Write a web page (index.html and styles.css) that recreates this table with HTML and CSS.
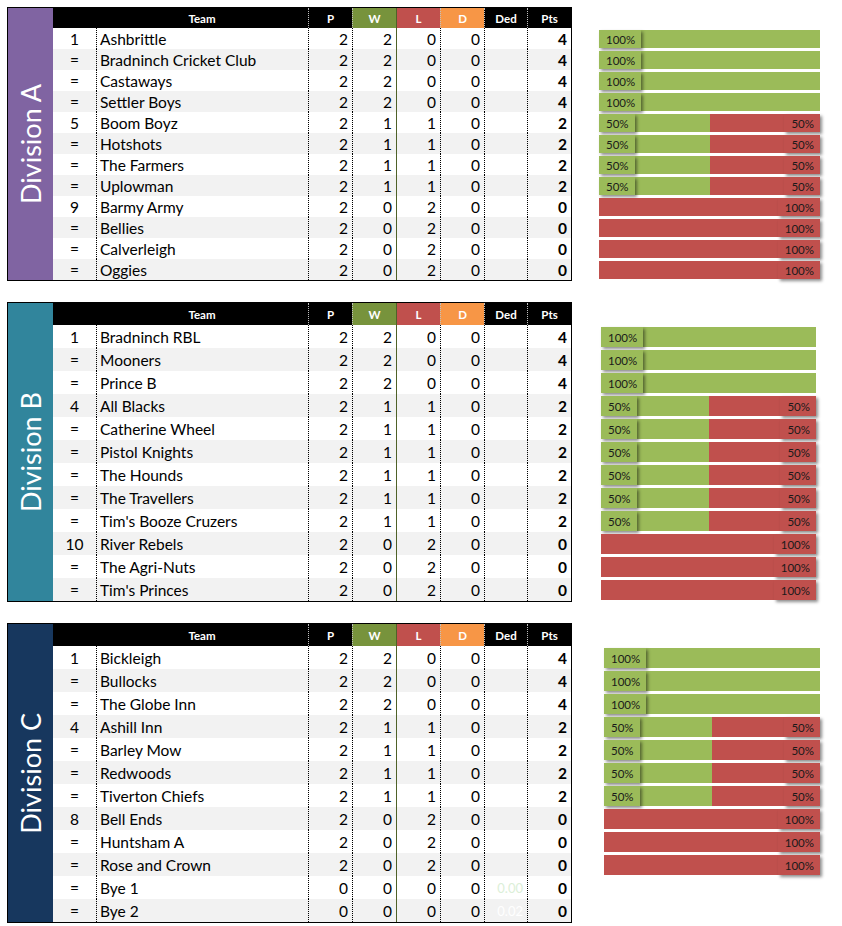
FILE: index.html
```html
<!DOCTYPE html>
<html lang="en">
<head>
<meta charset="utf-8">
<title>League Tables</title>
<link rel="stylesheet" href="styles.css">
</head>
<body>
<div class="page">

<section class="division div-a">
  <div class="board">
    <div class="label"><span>Division A</span></div>
    <div class="grid">
      <div class="row head"><div class="c rank"></div><div class="c team">Team</div><div class="c p">P</div><div class="c w">W</div><div class="c l">L</div><div class="c d">D</div><div class="c ded">Ded</div><div class="c pts">Pts</div></div>
      <div class="row"><div class="c rank">1</div><div class="c team">Ashbrittle</div><div class="c p">2</div><div class="c w">2</div><div class="c l">0</div><div class="c d">0</div><div class="c ded"></div><div class="c pts">4</div></div>
      <div class="row"><div class="c rank">=</div><div class="c team">Bradninch Cricket Club</div><div class="c p">2</div><div class="c w">2</div><div class="c l">0</div><div class="c d">0</div><div class="c ded"></div><div class="c pts">4</div></div>
      <div class="row"><div class="c rank">=</div><div class="c team">Castaways</div><div class="c p">2</div><div class="c w">2</div><div class="c l">0</div><div class="c d">0</div><div class="c ded"></div><div class="c pts">4</div></div>
      <div class="row"><div class="c rank">=</div><div class="c team">Settler Boys</div><div class="c p">2</div><div class="c w">2</div><div class="c l">0</div><div class="c d">0</div><div class="c ded"></div><div class="c pts">4</div></div>
      <div class="row"><div class="c rank">5</div><div class="c team">Boom Boyz</div><div class="c p">2</div><div class="c w">1</div><div class="c l">1</div><div class="c d">0</div><div class="c ded"></div><div class="c pts">2</div></div>
      <div class="row"><div class="c rank">=</div><div class="c team">Hotshots</div><div class="c p">2</div><div class="c w">1</div><div class="c l">1</div><div class="c d">0</div><div class="c ded"></div><div class="c pts">2</div></div>
      <div class="row"><div class="c rank">=</div><div class="c team">The Farmers</div><div class="c p">2</div><div class="c w">1</div><div class="c l">1</div><div class="c d">0</div><div class="c ded"></div><div class="c pts">2</div></div>
      <div class="row"><div class="c rank">=</div><div class="c team">Uplowman</div><div class="c p">2</div><div class="c w">1</div><div class="c l">1</div><div class="c d">0</div><div class="c ded"></div><div class="c pts">2</div></div>
      <div class="row"><div class="c rank">9</div><div class="c team">Barmy Army</div><div class="c p">2</div><div class="c w">0</div><div class="c l">2</div><div class="c d">0</div><div class="c ded"></div><div class="c pts">0</div></div>
      <div class="row"><div class="c rank">=</div><div class="c team">Bellies</div><div class="c p">2</div><div class="c w">0</div><div class="c l">2</div><div class="c d">0</div><div class="c ded"></div><div class="c pts">0</div></div>
      <div class="row"><div class="c rank">=</div><div class="c team">Calverleigh</div><div class="c p">2</div><div class="c w">0</div><div class="c l">2</div><div class="c d">0</div><div class="c ded"></div><div class="c pts">0</div></div>
      <div class="row"><div class="c rank">=</div><div class="c team">Oggies</div><div class="c p">2</div><div class="c w">0</div><div class="c l">2</div><div class="c d">0</div><div class="c ded"></div><div class="c pts">0</div></div>
    </div>
  </div>
  <div class="bars">
    <div class="bar-row"><div class="bar"><div class="seg win" style="width:100%"><span class="tag">100%</span></div></div></div>
    <div class="bar-row"><div class="bar"><div class="seg win" style="width:100%"><span class="tag">100%</span></div></div></div>
    <div class="bar-row"><div class="bar"><div class="seg win" style="width:100%"><span class="tag">100%</span></div></div></div>
    <div class="bar-row"><div class="bar"><div class="seg win" style="width:100%"><span class="tag">100%</span></div></div></div>
    <div class="bar-row"><div class="bar"><div class="seg win" style="width:50%"><span class="tag">50%</span></div><div class="seg loss"><span class="tag">50%</span></div></div></div>
    <div class="bar-row"><div class="bar"><div class="seg win" style="width:50%"><span class="tag">50%</span></div><div class="seg loss"><span class="tag">50%</span></div></div></div>
    <div class="bar-row"><div class="bar"><div class="seg win" style="width:50%"><span class="tag">50%</span></div><div class="seg loss"><span class="tag">50%</span></div></div></div>
    <div class="bar-row"><div class="bar"><div class="seg win" style="width:50%"><span class="tag">50%</span></div><div class="seg loss"><span class="tag">50%</span></div></div></div>
    <div class="bar-row"><div class="bar"><div class="seg loss"><span class="tag">100%</span></div></div></div>
    <div class="bar-row"><div class="bar"><div class="seg loss"><span class="tag">100%</span></div></div></div>
    <div class="bar-row"><div class="bar"><div class="seg loss"><span class="tag">100%</span></div></div></div>
    <div class="bar-row"><div class="bar"><div class="seg loss"><span class="tag">100%</span></div></div></div>
  </div>
</section>

<section class="division div-b">
  <div class="board">
    <div class="label"><span>Division B</span></div>
    <div class="grid">
      <div class="row head"><div class="c rank"></div><div class="c team">Team</div><div class="c p">P</div><div class="c w">W</div><div class="c l">L</div><div class="c d">D</div><div class="c ded">Ded</div><div class="c pts">Pts</div></div>
      <div class="row"><div class="c rank">1</div><div class="c team">Bradninch RBL</div><div class="c p">2</div><div class="c w">2</div><div class="c l">0</div><div class="c d">0</div><div class="c ded"></div><div class="c pts">4</div></div>
      <div class="row"><div class="c rank">=</div><div class="c team">Mooners</div><div class="c p">2</div><div class="c w">2</div><div class="c l">0</div><div class="c d">0</div><div class="c ded"></div><div class="c pts">4</div></div>
      <div class="row"><div class="c rank">=</div><div class="c team">Prince B</div><div class="c p">2</div><div class="c w">2</div><div class="c l">0</div><div class="c d">0</div><div class="c ded"></div><div class="c pts">4</div></div>
      <div class="row"><div class="c rank">4</div><div class="c team">All Blacks</div><div class="c p">2</div><div class="c w">1</div><div class="c l">1</div><div class="c d">0</div><div class="c ded"></div><div class="c pts">2</div></div>
      <div class="row"><div class="c rank">=</div><div class="c team">Catherine Wheel</div><div class="c p">2</div><div class="c w">1</div><div class="c l">1</div><div class="c d">0</div><div class="c ded"></div><div class="c pts">2</div></div>
      <div class="row"><div class="c rank">=</div><div class="c team">Pistol Knights</div><div class="c p">2</div><div class="c w">1</div><div class="c l">1</div><div class="c d">0</div><div class="c ded"></div><div class="c pts">2</div></div>
      <div class="row"><div class="c rank">=</div><div class="c team">The Hounds</div><div class="c p">2</div><div class="c w">1</div><div class="c l">1</div><div class="c d">0</div><div class="c ded"></div><div class="c pts">2</div></div>
      <div class="row"><div class="c rank">=</div><div class="c team">The Travellers</div><div class="c p">2</div><div class="c w">1</div><div class="c l">1</div><div class="c d">0</div><div class="c ded"></div><div class="c pts">2</div></div>
      <div class="row"><div class="c rank">=</div><div class="c team">Tim's Booze Cruzers</div><div class="c p">2</div><div class="c w">1</div><div class="c l">1</div><div class="c d">0</div><div class="c ded"></div><div class="c pts">2</div></div>
      <div class="row"><div class="c rank">10</div><div class="c team">River Rebels</div><div class="c p">2</div><div class="c w">0</div><div class="c l">2</div><div class="c d">0</div><div class="c ded"></div><div class="c pts">0</div></div>
      <div class="row"><div class="c rank">=</div><div class="c team">The Agri-Nuts</div><div class="c p">2</div><div class="c w">0</div><div class="c l">2</div><div class="c d">0</div><div class="c ded"></div><div class="c pts">0</div></div>
      <div class="row"><div class="c rank">=</div><div class="c team">Tim's Princes</div><div class="c p">2</div><div class="c w">0</div><div class="c l">2</div><div class="c d">0</div><div class="c ded"></div><div class="c pts">0</div></div>
    </div>
  </div>
  <div class="bars">
    <div class="bar-row"><div class="bar"><div class="seg win" style="width:100%"><span class="tag">100%</span></div></div></div>
    <div class="bar-row"><div class="bar"><div class="seg win" style="width:100%"><span class="tag">100%</span></div></div></div>
    <div class="bar-row"><div class="bar"><div class="seg win" style="width:100%"><span class="tag">100%</span></div></div></div>
    <div class="bar-row"><div class="bar"><div class="seg win" style="width:50%"><span class="tag">50%</span></div><div class="seg loss"><span class="tag">50%</span></div></div></div>
    <div class="bar-row"><div class="bar"><div class="seg win" style="width:50%"><span class="tag">50%</span></div><div class="seg loss"><span class="tag">50%</span></div></div></div>
    <div class="bar-row"><div class="bar"><div class="seg win" style="width:50%"><span class="tag">50%</span></div><div class="seg loss"><span class="tag">50%</span></div></div></div>
    <div class="bar-row"><div class="bar"><div class="seg win" style="width:50%"><span class="tag">50%</span></div><div class="seg loss"><span class="tag">50%</span></div></div></div>
    <div class="bar-row"><div class="bar"><div class="seg win" style="width:50%"><span class="tag">50%</span></div><div class="seg loss"><span class="tag">50%</span></div></div></div>
    <div class="bar-row"><div class="bar"><div class="seg win" style="width:50%"><span class="tag">50%</span></div><div class="seg loss"><span class="tag">50%</span></div></div></div>
    <div class="bar-row"><div class="bar"><div class="seg loss"><span class="tag">100%</span></div></div></div>
    <div class="bar-row"><div class="bar"><div class="seg loss"><span class="tag">100%</span></div></div></div>
    <div class="bar-row"><div class="bar"><div class="seg loss"><span class="tag">100%</span></div></div></div>
  </div>
</section>

<section class="division div-c">
  <div class="board">
    <div class="label"><span>Division C</span></div>
    <div class="grid">
      <div class="row head"><div class="c rank"></div><div class="c team">Team</div><div class="c p">P</div><div class="c w">W</div><div class="c l">L</div><div class="c d">D</div><div class="c ded">Ded</div><div class="c pts">Pts</div></div>
      <div class="row"><div class="c rank">1</div><div class="c team">Bickleigh</div><div class="c p">2</div><div class="c w">2</div><div class="c l">0</div><div class="c d">0</div><div class="c ded"></div><div class="c pts">4</div></div>
      <div class="row"><div class="c rank">=</div><div class="c team">Bullocks</div><div class="c p">2</div><div class="c w">2</div><div class="c l">0</div><div class="c d">0</div><div class="c ded"></div><div class="c pts">4</div></div>
      <div class="row"><div class="c rank">=</div><div class="c team">The Globe Inn</div><div class="c p">2</div><div class="c w">2</div><div class="c l">0</div><div class="c d">0</div><div class="c ded"></div><div class="c pts">4</div></div>
      <div class="row"><div class="c rank">4</div><div class="c team">Ashill Inn</div><div class="c p">2</div><div class="c w">1</div><div class="c l">1</div><div class="c d">0</div><div class="c ded"></div><div class="c pts">2</div></div>
      <div class="row"><div class="c rank">=</div><div class="c team">Barley Mow</div><div class="c p">2</div><div class="c w">1</div><div class="c l">1</div><div class="c d">0</div><div class="c ded"></div><div class="c pts">2</div></div>
      <div class="row"><div class="c rank">=</div><div class="c team">Redwoods</div><div class="c p">2</div><div class="c w">1</div><div class="c l">1</div><div class="c d">0</div><div class="c ded"></div><div class="c pts">2</div></div>
      <div class="row"><div class="c rank">=</div><div class="c team">Tiverton Chiefs</div><div class="c p">2</div><div class="c w">1</div><div class="c l">1</div><div class="c d">0</div><div class="c ded"></div><div class="c pts">2</div></div>
      <div class="row"><div class="c rank">8</div><div class="c team">Bell Ends</div><div class="c p">2</div><div class="c w">0</div><div class="c l">2</div><div class="c d">0</div><div class="c ded"></div><div class="c pts">0</div></div>
      <div class="row"><div class="c rank">=</div><div class="c team">Huntsham A</div><div class="c p">2</div><div class="c w">0</div><div class="c l">2</div><div class="c d">0</div><div class="c ded"></div><div class="c pts">0</div></div>
      <div class="row"><div class="c rank">=</div><div class="c team">Rose and Crown</div><div class="c p">2</div><div class="c w">0</div><div class="c l">2</div><div class="c d">0</div><div class="c ded"></div><div class="c pts">0</div></div>
      <div class="row"><div class="c rank">=</div><div class="c team">Bye 1</div><div class="c p">0</div><div class="c w">0</div><div class="c l">0</div><div class="c d">0</div><div class="c ded faint">0.00</div><div class="c pts">0</div></div>
      <div class="row"><div class="c rank">=</div><div class="c team">Bye 2</div><div class="c p">0</div><div class="c w">0</div><div class="c l">0</div><div class="c d">0</div><div class="c ded ghost">0.02</div><div class="c pts">0</div></div>
    </div>
  </div>
  <div class="bars">
    <div class="bar-row"><div class="bar"><div class="seg win" style="width:100%"><span class="tag">100%</span></div></div></div>
    <div class="bar-row"><div class="bar"><div class="seg win" style="width:100%"><span class="tag">100%</span></div></div></div>
    <div class="bar-row"><div class="bar"><div class="seg win" style="width:100%"><span class="tag">100%</span></div></div></div>
    <div class="bar-row"><div class="bar"><div class="seg win" style="width:50%"><span class="tag">50%</span></div><div class="seg loss"><span class="tag">50%</span></div></div></div>
    <div class="bar-row"><div class="bar"><div class="seg win" style="width:50%"><span class="tag">50%</span></div><div class="seg loss"><span class="tag">50%</span></div></div></div>
    <div class="bar-row"><div class="bar"><div class="seg win" style="width:50%"><span class="tag">50%</span></div><div class="seg loss"><span class="tag">50%</span></div></div></div>
    <div class="bar-row"><div class="bar"><div class="seg win" style="width:50%"><span class="tag">50%</span></div><div class="seg loss"><span class="tag">50%</span></div></div></div>
    <div class="bar-row"><div class="bar"><div class="seg loss"><span class="tag">100%</span></div></div></div>
    <div class="bar-row"><div class="bar"><div class="seg loss"><span class="tag">100%</span></div></div></div>
    <div class="bar-row"><div class="bar"><div class="seg loss"><span class="tag">100%</span></div></div></div>
  </div>
</section>

</div>
</body>
</html>
```

FILE: styles.css
```css
* { box-sizing: border-box; }

body {
  margin: 0;
  background: #ffffff;
  color: #000000;
  font-family: Lato, "Open Sans", "Liberation Sans", sans-serif;
}

.page {
  display: flex;
  flex-direction: column;
  gap: 21px;
  padding: 7px 0 0 7px;
}

.division {
  display: flex;
  align-items: flex-start;
}

.board {
  display: flex;
  border: 1px solid #000000;
}

.label {
  width: 45px;
  display: flex;
  align-items: center;
  justify-content: center;
}

.label span {
  writing-mode: vertical-rl;
  transform: rotate(180deg);
  color: #ffffff;
  font-size: 27px;
  line-height: 1;
}

.div-a .label { background: #8064a2; }
.div-b .label { background: #31859c; }
.div-c .label { background: #17375e; }

.grid {
  display: flex;
  flex-direction: column;
}

.row {
  display: grid;
  grid-template-columns: 43px 212px 44px 44px 44px 44px 43px 44px;
  height: 23px;
  font-size: 15.5px;
}

.div-a .row { height: 21px; }
.row.head { height: 22px; }
.div-a .row.head { height: 20px; }

.row:nth-child(odd):not(.head) { background: #f2f2f2; }

.c {
  display: flex;
  align-items: center;
  justify-content: flex-end;
  padding: 0 4px;
  border-left: 1px dotted #000000;
  white-space: nowrap;
}

.c.rank {
  justify-content: center;
  border-left: none;
}

.c.team {
  justify-content: flex-start;
  padding-left: 3px;
}

.c.l { border-left: 1px solid #4f6228; }

.c.pts { font-weight: 700; }

.c.faint { color: #dcefd8; font-size: 13px; }
.c.ghost { color: #ffffff; font-size: 13px; }

.row.head {
  background: #000000;
  color: #ffffff;
  font-size: 11.5px;
  font-weight: 700;
}

.row.head .c {
  justify-content: center;
  border-left-color: #bfbfbf;
}

.row.head .c.rank,
.row.head .c.team { border-left-color: transparent; }
.row.head .w { background: #77933c; }
.row.head .l { background: #c0504d; border-left-color: #4f6228; }
.row.head .d { background: #f79646; }

/* bars */
.bars {
  display: flex;
  flex-direction: column;
  width: 221px;
  margin-left: 27px;
  padding-top: 23px;
}

.div-a .bars { padding-top: 21px; }
.div-b .bars { width: 215px; margin-left: 29px; }
.div-c .bars { width: 216px; margin-left: 32px; }

.bar-row {
  height: 23px;
  padding-top: 2px;
}

.div-a .bar-row { height: 21px; }

.bar {
  display: flex;
  height: 20px;
}

.div-a .bar { height: 18px; }

.seg {
  display: flex;
  height: 100%;
}

.seg.win { background: #9bbb59; justify-content: flex-start; }
.seg.loss { background: #c0504d; flex: 1; justify-content: flex-end; }

.tag {
  display: flex;
  align-items: center;
  height: 100%;
  padding: 0 6px 0 7px;
  font-size: 11.5px;
  color: #1a1a1a;
  box-shadow: 2px 2px 3px rgba(0, 0, 0, 0.45);
}

.seg.win .tag { background: #9bbb59; }
.seg.loss .tag { background: #c0504d; }
```
